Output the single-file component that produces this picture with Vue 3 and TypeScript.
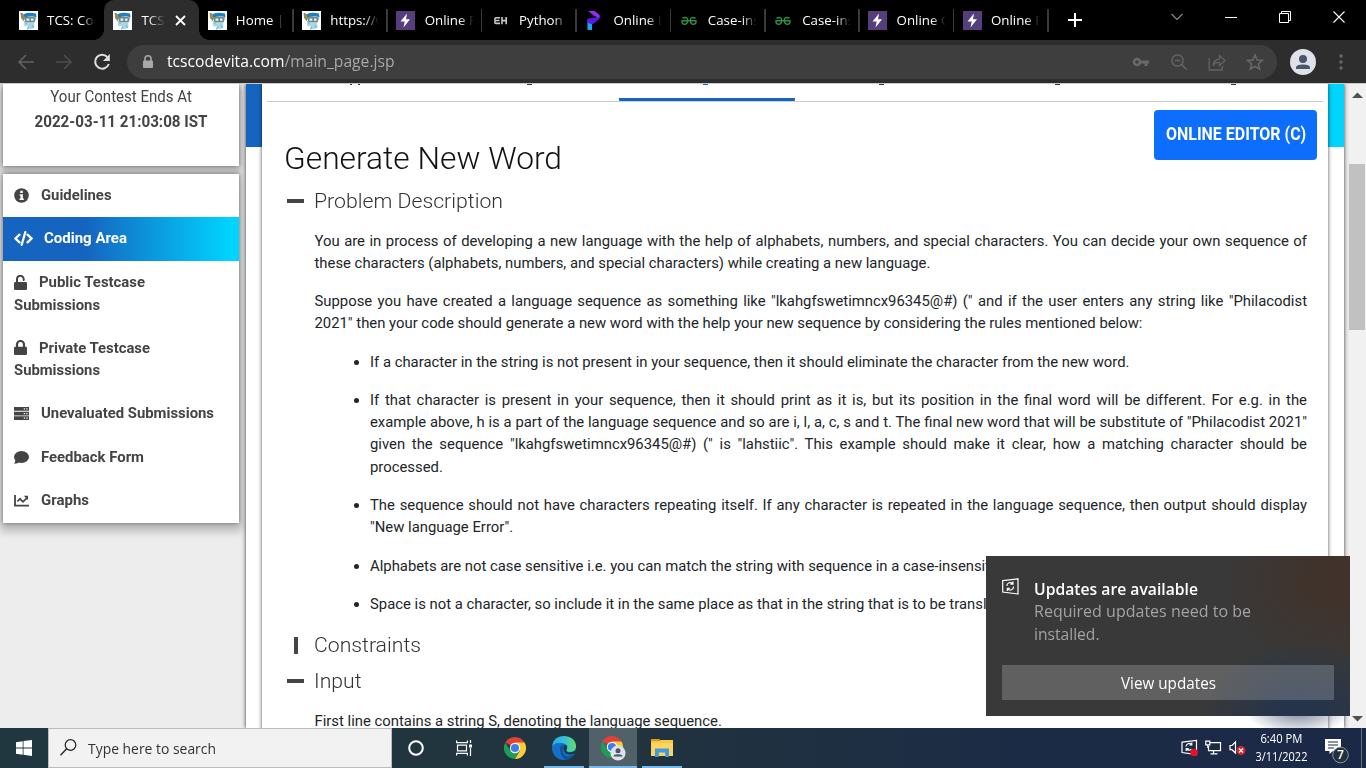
<script setup lang="ts">
import type { Directive } from 'vue'

// Stretches or narrows a single-line label so that it takes the given width.
const vFit: Directive<HTMLElement, number> = {
  mounted(el, binding) {
    const natural = el.getBoundingClientRect().width
    if (natural > 0) {
      el.style.transform = `scaleX(${binding.value / natural})`
    }
  },
}

interface Tab {
  icon: 'tcs' | 'bolt' | 'eh' | 'p' | 'gfg'
  title: string
  active?: boolean
  line?: boolean
}

const tabs: Tab[] = [
  { icon: 'tcs', title: 'TCS: Code' },
  { icon: 'tcs', title: 'TCS:', active: true },
  { icon: 'tcs', title: 'Home | T', line: true },
  { icon: 'tcs', title: 'https://w', line: true },
  { icon: 'bolt', title: 'Online P', line: true },
  { icon: 'eh', title: 'Python P', line: true },
  { icon: 'p', title: 'Online P', line: true },
  { icon: 'gfg', title: 'Case-ins', line: true },
  { icon: 'gfg', title: 'Case-ins', line: true },
  { icon: 'bolt', title: 'Online C', line: true },
  { icon: 'bolt', title: 'Online P', line: true },
]

interface MenuItem {
  icon: string
  lines: string[]
  widths: number[]
  cls: string
}

const menu: MenuItem[] = [
  { icon: 'info', lines: ['Guidelines'], widths: [70.5], cls: 'h43' },
  { icon: 'code', lines: ['Coding Area'], widths: [83], cls: 'h44 selected' },
  { icon: 'unlock', lines: ['Public Testcase', 'Submissions'], widths: [106, 86], cls: 'h65' },
  { icon: 'lock', lines: ['Private Testcase', 'Submissions'], widths: [111, 86], cls: 'h65' },
  { icon: 'server', lines: ['Unevaluated Submissions'], widths: [173], cls: 'h44' },
  { icon: 'comment', lines: ['Feedback Form'], widths: [103], cls: 'h43' },
  { icon: 'chart', lines: ['Graphs'], widths: [48], cls: 'h44' },
]

const intro: string[][] = [
  [
    'You are in process of developing a new language with the help of alphabets, numbers, and special characters. You can decide your own sequence of',
    'these characters (alphabets, numbers, and special characters) while creating a new language.',
  ],
  [
    'Suppose you have created a language sequence as something like "lkahgfswetimncx96345@#) (" and if the user enters any string like "Philacodist',
    '2021" then your code should generate a new word with the help your new sequence by considering the rules mentioned below:',
  ],
]

const rules: string[][] = [
  ['If a character in the string is not present in your sequence, then it should eliminate the character from the new word.'],
  [
    'If that character is present in your sequence, then it should print as it is, but its position in the final word will be different. For e.g. in the',
    'example above, h is a part of the language sequence and so are i, l, a, c, s and t. The final new word that will be substitute of "Philacodist 2021"',
    'given the sequence "lkahgfswetimncx96345@#) (" is "lahstiic". This example should make it clear, how a matching character should be',
    'processed.',
  ],
  [
    'The sequence should not have characters repeating itself. If any character is repeated in the language sequence, then output should display',
    '"New language Error".',
  ],
  ['Alphabets are not case sensitive i.e. you can match the string with sequence in a case-insensitive manner.'],
  ['Space is not a character, so include it in the same place as that in the string that is to be translated.'],
]
</script>

<template>
  <div class="screen">
    <header class="tabbar">
      <div class="tabs">
        <div v-for="(t, i) in tabs" :key="i" class="tab" :class="{ active: t.active, line: t.line }">
          <span class="fav">
            <svg v-if="t.icon === 'tcs'" width="19" height="19" viewBox="0 0 19 19">
              <rect width="19" height="19" fill="#fff" />
              <path d="M4 3.500Q8 .5 17 2.500L17.500 6.500Q11 4 5.500 7Z" fill="#1d7fc4" />
              <path d="M5 6.500Q11 4.500 17 6.800L15.500 11.500H6.500Z" fill="#6d8889" />
              <path d="M7.500 7.500h2.800v2.300H7.500zM12 7.500h2.500v2.300H12z" fill="#e8f4f6" />
              <path d="M6 11.500q5 1.500 9-.5l.5 5.500-3 1.500H8.500l.5-3-3 .5-1.500-2.500Z" fill="#a5d8e6" />
              <path d="M1.500 1.500l2.500 1 2 4.500-1.500 3L2 7Z" fill="#9b8a4c" />
              <path d="M4 9l3.500 4M9.500 15.500l-1 3M13 14l1.500 3" stroke="#62b4d4" stroke-width="1" />
            </svg>
            <svg v-else-if="t.icon === 'bolt'" width="19" height="19" viewBox="0 0 19 19">
              <rect width="19" height="19" fill="#563d7c" />
              <path d="M11 2.500L4.500 10.500H8.700L7.500 16.500L14 8.300H10Z" fill="#fff" />
            </svg>
            <svg v-else-if="t.icon === 'eh'" width="19" height="19" viewBox="0 0 19 19">
              <path d="M9 6.800H5Q3.800 6.800 3.800 8Q3.800 9.500 5 9.500H8.500M5 9.500Q3.800 9.500 3.800 11Q3.800 12.400 5 12.400H9M11 6v7.200M15.200 6v7.200M11 9.600h4.200" fill="none" stroke="#c9c9c9" stroke-width="1.600" />
            </svg>
            <svg v-else-if="t.icon === 'p'" width="19" height="19" viewBox="0 0 19 19">
              <path d="M2.500 9h4.500v10H2.500z" fill="#17a8f5" />
              <path d="M2.500 7.500l7-.5 5-3v3.500l-5 4.500-2.500 1.500-4.500-2Z" fill="#5a17e8" />
              <path d="M3 0h6.500L14.500 4v3L9.500 5Z" fill="#9a2bfb" />
            </svg>
            <svg v-else width="19" height="19" viewBox="0 0 19 19">
              <path d="M1.500 9.700H16.500M2.500 7.300Q7.700 4.800 7.700 9.700Q7.400 13.400 4.200 13.200Q1.500 12.800 2.100 9.700M15.500 7.300Q10.300 4.800 10.300 9.700Q10.600 13.400 13.800 13.200Q16.500 12.800 15.900 9.700" fill="none" stroke="#2f8d46" stroke-width="1.500" />
            </svg>
          </span>
          <span class="title">{{ t.title }}</span>
          <svg v-if="t.active" class="close" width="11" height="11" viewBox="0 0 11 11">
            <path d="M1 1l9 9M10 1l-9 9" stroke="#fff" stroke-width="1.800" />
          </svg>
        </div>
        <svg class="plus" width="14" height="14" viewBox="0 0 14 14">
          <path d="M7 0v14M0 7h14" stroke="#fff" stroke-width="2" />
        </svg>
      </div>
      <div class="winctl">
        <svg width="14" height="14" viewBox="0 0 14 14"><path d="M1.500 4l5.500 5.500L12.500 4" fill="none" stroke="#8c8c8c" stroke-width="1.100" /></svg>
        <svg width="14" height="14" viewBox="0 0 14 14"><path d="M1 7.500h12" stroke="#fff" /></svg>
        <svg width="14" height="14" viewBox="0 0 14 14"><path d="M1.500 3.500h9v9h-9zM3.500 3.500v-2h9v9h-2" fill="none" stroke="#fff" /></svg>
        <svg width="14" height="14" viewBox="0 0 14 14"><path d="M1.500 1.500l11 11M12.500 1.500l-11 11" stroke="#fff" stroke-width="1.100" /></svg>
      </div>
    </header>

    <div class="toolbar">
      <div class="nav">
        <svg width="18" height="18" viewBox="0 0 18 18"><path d="M17 9H2M9 2L2 9l7 7" fill="none" stroke="#626262" stroke-width="1.700" /></svg>
        <svg width="18" height="18" viewBox="0 0 18 18"><path d="M1 9h15M9 2l7 7-7 7" fill="none" stroke="#4c4c4c" stroke-width="1.700" /></svg>
        <svg width="18" height="18" viewBox="0 0 18 18"><path d="M14.800 4.500A7 7 0 1 0 15.800 11" fill="none" stroke="#dedede" stroke-width="2" /><path d="M16.800 1v7H10Z" fill="#dedede" /></svg>
      </div>
      <div class="omnibox">
        <svg class="padlock" width="12" height="14" viewBox="0 0 12 14"><path d="M3 6V3.800a3 3 0 0 1 6 0V6" fill="none" stroke="#a7a9ad" stroke-width="1.600" /><rect x="1" y="5.500" width="10" height="7.500" rx="1" fill="#a7a9ad" /></svg>
        <span v-fit="227.500" class="url"><b>tcscodevita.com</b>/main_page.jsp</span>
        <div class="actions">
          <svg width="18" height="18" viewBox="0 0 18 18"><circle cx="5" cy="9" r="3" fill="none" stroke="#686868" stroke-width="2.600" /><path d="M8.500 7.500H17v3h-1.500V13h-3v-2.500h-4Z" fill="#686868" /></svg>
          <svg width="18" height="18" viewBox="0 0 18 18"><circle cx="7.500" cy="7.500" r="5.600" fill="none" stroke="#636363" stroke-width="1.500" /><path d="M4.800 7.500h5.400M11.500 11.500l5 5" stroke="#636363" stroke-width="1.700" /></svg>
          <svg width="18" height="18" viewBox="0 0 18 18"><path d="M1.200 5v12h13v-4M5 12.500Q6 6.500 11.500 6V2.500L17 7.500l-5.500 5V9.500Q7 9 5 12.500Z" fill="none" stroke="#636363" stroke-width="1.300" /></svg>
          <svg width="18" height="18" viewBox="0 0 18 18"><path d="M9 2l2.100 5 5.400.4-4.100 3.500 1.300 5.300L9 13.300l-4.700 2.900 1.300-5.300L1.500 7.400 6.900 7Z" fill="none" stroke="#686868" stroke-width="1.500" /></svg>
        </div>
      </div>
      <svg class="avatar" width="26" height="26" viewBox="0 0 26 26"><circle cx="13" cy="13" r="13" fill="#dfe2e8" /><circle cx="13" cy="10" r="4" fill="#4a5669" /><path d="M6 20v-1.500Q6 15.500 13 15.500T20 18.500V20Z" fill="#4a5669" /></svg>
      <svg class="dots" width="4" height="16" viewBox="0 0 4 16"><circle cx="2" cy="2" r="1.700" fill="#686868" /><circle cx="2" cy="8" r="1.700" fill="#686868" /><circle cx="2" cy="14" r="1.700" fill="#686868" /></svg>
    </div>

    <div class="page">
      <aside class="side">
        <section class="card contest">
          <div><span v-fit="141.500" class="ends">Your Contest Ends At</span></div>
          <div><span v-fit="173" class="time">2022-03-11 21:03:08 IST</span></div>
        </section>
        <nav class="card menu">
          <div v-for="m in menu" :key="m.icon" class="item" :class="m.cls">
            <div class="row">
              <svg v-if="m.icon === 'info'" width="15" height="15" viewBox="0 0 15 15"><circle cx="7.500" cy="7.500" r="7.300" fill="#444" /><path d="M6.300 2.800h2.500v2.200H6.300zM5.700 6.200h3.200v4.200h.9v1.700H5.500v-1.700h1V7.800h-.8Z" fill="#fff" /></svg>
              <svg v-else-if="m.icon === 'code'" width="19" height="15" viewBox="0 0 19 15"><path d="M5.500 3.700L1.500 7.500l4 3.800M13.500 3.700l4 3.800-4 3.800M11.300 1.200L7.700 13.800" fill="none" stroke="#fff" stroke-width="2.300" stroke-linecap="round" /></svg>
              <svg v-else-if="m.icon === 'unlock'" width="13" height="15" viewBox="0 0 13 15"><path d="M3 7.500V4.200a3.300 3.300 0 0 1 6.700-.2V5" fill="none" stroke="#444" stroke-width="2" stroke-linecap="round" /><rect y="7" width="13" height="8" rx="1.300" fill="#444" /></svg>
              <svg v-else-if="m.icon === 'lock'" width="13" height="15" viewBox="0 0 13 15"><path d="M3 7.500V4.500a3.500 3.500 0 0 1 7 0v3" fill="none" stroke="#444" stroke-width="2.200" /><rect y="6.700" width="13" height="8.300" rx="1.300" fill="#444" /></svg>
              <svg v-else-if="m.icon === 'server'" width="15" height="15" viewBox="0 0 15 15"><path d="M0 1h15v3.700H0zM0 5.700h15v3.700H0zM0 10.300h15V14H0z" fill="#444" /><path d="M9.800 2.300h1.300v1.200H9.800zM12.300 2.300h1.300v1.200h-1.300zM9.800 7h1.300v1.200H9.800zM12.300 7h1.300v1.200h-1.300zM9.800 11.600h1.300v1.200H9.800zM12.300 11.600h1.300v1.200h-1.300z" fill="#fff" /></svg>
              <svg v-else-if="m.icon === 'comment'" width="15" height="15" viewBox="0 0 15 15"><ellipse cx="7.500" cy="7" rx="7.500" ry="5.900" fill="#444" /><path d="M1.500 9Q1.500 12 0 13.800Q3.500 14 5.500 12Z" fill="#444" /></svg>
              <svg v-else width="15" height="15" viewBox="0 0 15 15"><path d="M1 2v10.700h14" fill="none" stroke="#444" stroke-width="1.800" /><path d="M3.300 8.500l2.700-2.700 3 3 4-4" fill="none" stroke="#444" stroke-width="1.700" /><path d="M9.800 2.800H14V7Z" fill="#444" /></svg>
              <span v-fit="m.widths[0]" class="label">{{ m.lines[0] }}</span>
            </div>
            <div v-if="m.lines[1]" class="row"><span v-fit="m.widths[1]" class="label">{{ m.lines[1] }}</span></div>
          </div>
        </nav>
      </aside>

      <main class="outer">
        <div class="banner"></div>
        <article class="sheet">
          <div class="steps">
            <i class="wide"></i><i></i><i class="on"></i><i></i><i></i><i></i>
          </div>
          <div class="headrow">
            <h1 v-fit="278">Generate New Word</h1>
            <button class="editor"><span v-fit="140">ONLINE EDITOR (C)</span></button>
          </div>
          <h2><span class="bar"></span><span v-fit="189">Problem Description</span></h2>
          <div class="copy">
            <p v-for="(p, i) in intro" :key="i">
              <span v-for="(l, j) in p" :key="j" class="ln" :class="{ just: j < p.length - 1 }">{{ l }}</span>
            </p>
            <ul>
              <li v-for="(p, i) in rules" :key="i">
                <span v-for="(l, j) in p" :key="j" class="ln" :class="{ just: j < p.length - 1 }">{{ l }}</span>
              </li>
            </ul>
          </div>
          <h2><span class="bar upright"></span><span v-fit="107">Constraints</span></h2>
          <h2 class="gap"><span class="bar"></span><span v-fit="47.500">Input</span></h2>
          <div class="copy">
            <p><span class="ln">First line contains a string S, denoting the language sequence.</span></p>
          </div>
        </article>
      </main>

      <div class="scroll">
        <svg width="11" height="6" viewBox="0 0 11 6"><path d="M0 6L5.500 .5 11 6Z" fill="#505050" /></svg>
        <div class="thumb"></div>
        <svg class="down" width="11" height="6" viewBox="0 0 11 6"><path d="M0 0L5.500 5.500 11 0Z" fill="#505050" /></svg>
      </div>
    </div>

    <div class="glow"></div>
    <aside class="toast">
      <div class="msg">
        <svg width="17" height="17" viewBox="0 0 17 17"><path d="M.7 2.700L16 .8V16L.7 14Z" fill="none" stroke="#fff" stroke-width="1.200" /><path d="M4.800 8a3.400 3.400 0 0 1 6-2.200M11 3.500v2.600H8.500M11.600 8.600a3.400 3.400 0 0 1-6 2.200M5.300 13v-2.600h2.500" fill="none" stroke="#fff" stroke-width="1.200" /></svg>
        <div class="txt">
          <div><strong v-fit="164">Updates are available</strong></div>
          <div><span v-fit="217">Required updates need to be</span></div>
          <div><span v-fit="65.500">installed.</span></div>
        </div>
      </div>
      <button class="view"><span v-fit="95">View updates</span></button>
    </aside>

    <footer class="taskbar">
      <div class="start">
        <svg width="16" height="16" viewBox="0 0 16 16"><path d="M0 2.300l6.700-1v6.300H0zM7.500 1.100L16 0v7.600H7.500zM0 8.400h6.700v6.300L0 13.800zM7.500 8.400H16V16l-8.500-1.200z" fill="#fff" /></svg>
      </div>
      <div class="search">
        <svg width="17" height="17" viewBox="0 0 17 17"><circle cx="10.500" cy="6" r="5.300" fill="none" stroke="#222" stroke-width="1.200" /><path d="M6.600 9.800L.5 16.300" stroke="#222" stroke-width="1.300" /></svg>
        <span v-fit="128">Type here to search</span>
      </div>
      <div class="app near"><svg width="16" height="16" viewBox="0 0 16 16"><circle cx="8" cy="8" r="6.800" fill="none" stroke="#fff" stroke-width="2" /></svg></div>
      <div class="app near"><svg width="17" height="16" viewBox="0 0 17 16"><path d="M.6 .5v2.200h10.800V.5M.6 15.500v-2.200h10.800v2.200M1.500 5.200h9v5.600h-9zM14.500 0v3M14.500 8v8" fill="none" stroke="#fff" stroke-width="1.200" /><path d="M13 4.500h3v3h-3z" fill="#fff" /></svg></div>
      <div class="app">
        <svg width="22" height="22" viewBox="0 0 22 22"><path d="M11 11L1.470 5.500A11 11 0 0 1 20.530 5.500Z" fill="#e04237" /><path d="M1.470 5.500A11 11 0 0 0 11 22L15.800 13.600 6.200 13.700Z" fill="#1f9d55" /><path d="M20.530 5.500A11 11 0 0 1 11 22L15.800 13.700 11 5.500Z" fill="#fbcb38" /><circle cx="11" cy="11" r="5.200" fill="#fff" /><circle cx="11" cy="11" r="4.100" fill="#3f7ee8" /></svg>
      </div>
      <div class="app open">
        <svg width="24" height="24" viewBox="0 0 24 24">
          <defs>
            <linearGradient id="eg" x1="0" x2="1"><stop offset="0" stop-color="#29a8e8" /><stop offset=".5" stop-color="#35c1d8" /><stop offset="1" stop-color="#63df64" /></linearGradient>
          </defs>
          <circle cx="12" cy="12" r="12" fill="#1272c9" />
          <path d="M.2 10Q1.500 0 12 0Q24 1 24 11Q23 16 17.500 16Q13.500 15.500 14.800 13Q16.500 8 10 7Q4 6 .2 10Z" fill="url(#eg)" />
          <path d="M8 13Q8 8.500 12.500 8.700Q8 15 13 19.500Q17 22 22 18Q19 23.500 13.500 24Q8 20 8 13Z" fill="#124f99" />
          <path d="M13 8.800Q16 9.500 15 12.500Q13.300 15 15 15.800Q18 17.500 24 14.500L23 17.500Q15 20.500 12 15Q10.500 11 13 8.800Z" fill="#21343f" />
        </svg>
      </div>
      <div class="app current">
        <svg width="26" height="26" viewBox="0 0 26 26"><g transform="translate(1 1)"><path d="M11 11L1.470 5.500A11 11 0 0 1 20.530 5.500Z" fill="#e04237" /><path d="M1.470 5.500A11 11 0 0 0 11 22L15.800 13.600 6.200 13.700Z" fill="#1f9d55" /><path d="M20.530 5.500A11 11 0 0 1 11 22L15.800 13.700 11 5.500Z" fill="#fbcb38" /><circle cx="11" cy="11" r="5.200" fill="#fff" /><circle cx="11" cy="11" r="4.100" fill="#3f7ee8" /></g><circle cx="18" cy="18" r="7.600" fill="#dfe2e8" /><circle cx="18" cy="15.800" r="2.500" fill="#4a5669" /><path d="M13.500 21.500Q13.500 19.200 18 19.200T22.500 21.500Z" fill="#4a5669" /></svg>
      </div>
      <div class="app open">
        <svg width="22" height="20" viewBox="0 0 22 20"><path d="M0 1h8.500l1.500 2H0Z" fill="#d99a1c" /><path d="M0 3h22v15H0Z" fill="#fcd462" /><path d="M0 3h9l1-1h12v3H0Z" fill="#f9c843" /><path d="M4 19v-8.500h14V19h-3.800v-4.500H7.800V19Z" fill="#3f9be0" /></svg>
      </div>
      <div class="tray">
        <svg class="upd" width="18" height="18" viewBox="0 0 18 18"><path d="M1 3.200L15.500 1.500V15.500L1 13.500Z" fill="none" stroke="#fff" stroke-width="1.200" /><path d="M5 7.500a3.200 3.200 0 0 1 5.500-2M10.800 3.600v2.400H8.400M5.200 12l0-2.400h2.500M5.500 9.800q2 2.500 5 .5" fill="none" stroke="#fff" stroke-width="1.200" /><circle cx="13" cy="13.500" r="3.700" fill="#e81123" /></svg>
        <svg class="net" width="17" height="16" viewBox="0 0 17 16"><path d="M5 2.600h10.500v8H3.500V6M8.500 10.600v3M5.500 13.800h7M.8 1.200h4v3.600h-4zM2.800 4.800V8" fill="none" stroke="#fff" stroke-width="1.200" /></svg>
        <svg class="vol" width="17" height="16" viewBox="0 0 17 16"><path d="M1 5.500h2L6.500 2v11L3 9.700H1Z" fill="none" stroke="#fff" stroke-width="1.200" /><circle cx="12" cy="10.500" r="4.500" fill="#d8252c" /><path d="M10 8.500l4 4M14 8.500l-4 4" stroke="#fff" stroke-width="1.200" /></svg>
        <div class="clock">
          <span v-fit="42">6:40 PM</span>
          <span v-fit="52">3/11/2022</span>
        </div>
        <svg class="note" width="26" height="26" viewBox="0 0 26 26"><path d="M1 1h16v12H9L5.500 16v-3H1Z" fill="#fff" /><path d="M4 4h10M4 7h10M4 10h6" stroke="#1b2a49" stroke-width="1.200" /><circle cx="16.500" cy="17" r="7.800" fill="#22303c" stroke="#8d949c" /><text x="16.500" y="21.200" text-anchor="middle" font-size="12" font-family="Open Sans, sans-serif" font-weight="600" fill="#fff">7</text></svg>
        <div class="peek"></div>
      </div>
    </footer>
  </div>
</template>

<style>
body {
  overflow: hidden;
}
</style>

<style scoped>
* {
  box-sizing: border-box;
}
.screen {
  position: relative;
  width: 1366px;
  height: 768px;
  overflow: hidden;
  display: flex;
  flex-direction: column;
  font-family: 'Open Sans', 'Noto Sans', sans-serif;
  background: #ededed;
}
svg {
  flex: none;
  display: block;
}
.screen span,
.screen strong,
h1 {
  white-space: nowrap;
}
.title,
.url,
.ends,
.time,
.label,
.search span,
.editor span,
.view span,
.txt span,
.txt strong,
.clock span,
h1,
h2 span {
  display: inline-block;
  transform-origin: 0 50%;
}

.tabbar {
  height: 40px;
  background: #000;
  display: flex;
  justify-content: space-between;
}
.tabs {
  display: flex;
  padding-left: 9.900px;
}
.tab {
  width: 94.400px;
  height: 40px;
  padding: 0 15px 0 9px;
  display: flex;
  align-items: center;
  position: relative;
}
.tab.line::after {
  content: '';
  position: absolute;
  right: -0.500px;
  top: 9px;
  width: 1.500px;
  height: 23px;
  background: #3a3a3a;
}
.tab.active {
  background: #2d2d2d;
  border-radius: 10px 10px 0 0;
}
.tab.active::before,
.tab.active::after {
  content: '';
  position: absolute;
  bottom: 0;
  left: -10px;
  width: 10px;
  height: 10px;
  background: radial-gradient(circle at 0 0, #000 9.500px, #2d2d2d 10px);
}
.tab.active::after {
  left: auto;
  right: -10px;
  background: radial-gradient(circle at 100% 0, #000 9.500px, #2d2d2d 10px);
}
.fav {
  width: 19px;
  margin-right: 9.200px;
  flex: none;
}
.title {
  width: 49px;
  flex: none;
  overflow: hidden;
  font-size: 13.300px;
  color: #fff;
  -webkit-mask-image: linear-gradient(90deg, #000 70%, transparent 99%);
  mask-image: linear-gradient(90deg, #000 70%, transparent 99%);
}
.active .title {
  width: 25px;
  -webkit-mask-image: linear-gradient(90deg, #000 30%, transparent 98%);
  mask-image: linear-gradient(90deg, #000 30%, transparent 98%);
}
.close {
  margin-left: 8.800px;
}
.plus {
  margin: 13px 0 0 19.500px;
}
.winctl {
  display: flex;
  gap: 40px;
  padding: 10px 20px 0 0;
}

.toolbar {
  height: 44px;
  background: #2d2d2d;
  border-bottom: 1px solid #c9c9c9;
  display: flex;
  align-items: center;
}
.nav {
  width: 127px;
  padding-left: 17px;
  display: flex;
  gap: 20px;
}
.omnibox {
  width: 1150px;
  height: 34px;
  border-radius: 17px;
  background: #3e3e3e;
  display: flex;
  align-items: center;
  padding: 0 13px 0 15px;
}
.url {
  margin: -2px 0 0 13px;
  font-size: 16px;
  color: #a8a8a8;
}
.url b {
  font-weight: 400;
  color: #fff;
}
.actions {
  margin-left: auto;
  display: flex;
  gap: 20px;
}
.avatar {
  margin-left: 13px;
}
.dots {
  margin-left: 23px;
}

.page {
  height: 644px;
  display: flex;
  overflow: hidden;
  font-family: Roboto, sans-serif;
  color: #212529;
}
.side {
  width: 246px;
  padding-left: 3px;
  flex: none;
}
.card {
  width: 236px;
  background: #fff;
  box-shadow: 0 0 5px rgba(0, 0, 0, 0.450), 0 6px 8px 3px rgba(0, 0, 0, 0.200);
}
.contest {
  height: 82px;
  text-align: center;
  color: #444;
  font-size: 17px;
  line-height: 25px;
}
.ends,
.time {
  transform-origin: 50% 50%;
}
.time {
  font-weight: 700;
}
.menu {
  margin-top: 8px;
  position: relative;
}
.item {
  padding: 10px 11px 0;
  color: #444;
  font-size: 15px;
  font-weight: 700;
}
.row {
  display: flex;
  align-items: center;
  height: 22.500px;
}
.row svg + .label {
  margin-left: 12px;
}
.selected {
  color: #fff;
  background: linear-gradient(90deg, #1565c0 0%, #1565c0 35%, #00d4ff 97%);
}
.selected .row svg + .label {
  margin-left: 11px;
}
.h43 {
  height: 43px;
}
.h44 {
  height: 44px;
}
.h65 {
  height: 65.500px;
}

.outer {
  width: 1098px;
  background: #fff;
  box-shadow: 0 0 4px rgba(0, 0, 0, 0.800);
  position: relative;
  padding: 0 16px;
}
.banner {
  height: 63px;
  margin: 0 -16px -63px;
  background: linear-gradient(90deg, #1565c0 35%, #00d4ff 97%);
}
.sheet {
  position: relative;
  height: 660px;
  background: #fff;
  box-shadow: 0 0 4px rgba(0, 0, 0, 0.700);
}
.steps {
  height: 18px;
  margin: 0 5px;
  border-bottom: 1px solid #ccc;
  display: grid;
  grid-template-columns: repeat(6, 176px);
}
.steps i {
  border-bottom: 3px solid transparent;
  background: linear-gradient(#333, #333) 84px 0 / 5px 1px no-repeat;
}
.steps .wide {
  background:
    linear-gradient(#333, #333) 83px 0 / 2px 1px no-repeat,
    linear-gradient(#333, #333) 91px 0 / 2px 1px no-repeat;
}
.steps .on {
  border-bottom-color: #1565c0;
  border-radius: 1px;
  background-image: linear-gradient(#1565c0, #1565c0);
}
.headrow {
  display: flex;
  justify-content: space-between;
  padding: 8px 11px 0 21.500px;
  height: 86px;
}
h1 {
  margin: 28px 0 0;
  height: 40px;
  line-height: 40px;
  font-size: 32px;
  font-weight: 300;
  color: #111;
}
.editor {
  width: 163px;
  height: 50px;
  padding: 0 0 3px 12px;
  border: 0;
  border-radius: 4px;
  background: #0d6efd;
  color: #fff;
  text-align: left;
  font: 700 19px Roboto, sans-serif;
}
h2 {
  margin: 0;
  height: 26px;
  padding-left: 25px;
  display: flex;
  align-items: center;
  font-size: 21px;
  font-weight: 300;
  line-height: 26px;
  color: #333;
}
h2.gap {
  margin-top: 10px;
}
.bar {
  width: 17px;
  height: 4px;
  margin-right: 9.500px;
  background: #444;
}
.bar.upright {
  width: 4px;
  height: 17px;
  margin: 0 15.500px 0 7px;
}
.copy {
  padding: 15.500px 21px 0 52.500px;
  font-size: 14.850px;
  line-height: 22.275px;
}
.copy p {
  margin: 0 0 16px;
}
.copy ul {
  margin: 0;
  padding: 0 0 0.900px 55.500px;
}
.copy li {
  margin-bottom: 16px;
}
.ln {
  display: block;
}
.just {
  text-align: justify;
  text-align-last: justify;
  white-space: normal !important;
}

.scroll {
  margin-left: auto;
  width: 17px;
  background: #f1f1f1;
  display: flex;
  flex-direction: column;
  align-items: center;
  padding: 8px 0 6px;
}
.thumb {
  width: 16px;
  height: 166px;
  margin: 66px 1px 0 0;
  background: #c1c1c1;
}
.down {
  margin-top: auto;
}

.glow {
  position: absolute;
  left: 1240px;
  top: 690px;
  width: 109px;
  height: 38px;
  background: radial-gradient(ellipse 52px 24px at 58px 21px, rgba(50, 70, 100, 0.650), rgba(50, 70, 100, 0));
}
.toast {
  position: absolute;
  left: 986px;
  top: 556px;
  width: 364px;
  height: 160px;
  padding: 22px 16px 0;
  color: #fff;
  background:
    radial-gradient(ellipse 100px 75px at 315px 160px, #26344a 25%, rgba(38, 52, 74, 0)),
    radial-gradient(ellipse 115px 90px at 350px 25px, #40332c 25%, rgba(64, 51, 44, 0)),
    #393939;
}
.msg {
  display: flex;
  gap: 15px;
  height: 87px;
}
.txt {
  font-size: 16px;
  line-height: 22.300px;
  color: #a3a3a3;
}
.txt strong {
  font-weight: 600;
  color: #fff;
}
.view {
  display: block;
  width: 332px;
  height: 35px;
  padding: 0 0 0 119px;
  border: 0;
  text-align: left;
  background: rgba(255, 255, 255, 0.200);
  color: #fff;
  font: 15.500px 'Open Sans', sans-serif;
}

.taskbar {
  height: 40px;
  display: flex;
  background: linear-gradient(90deg, #213740 0%, #21343f 45%, #1c2b45 75%, #1b2947 100%);
  color: #fff;
}
.start {
  width: 48px;
  display: grid;
  place-items: center;
}
.search {
  width: 344px;
  padding: 0 12px 1px 11px;
  display: flex;
  align-items: center;
  gap: 11px;
  background: #f2f2f2;
  border: 1px solid #bcbcbc;
  color: #333;
  font-size: 15px;
}
.app {
  width: 49px;
  display: grid;
  place-items: center;
  position: relative;
}
.near {
  padding-right: 2px;
}
.open::after,
.current::after {
  content: '';
  position: absolute;
  left: 5px;
  right: 4px;
  bottom: 0;
  height: 2px;
  background: #76b9ed;
}
.current {
  left: 1px;
  background: #51616a;
  background-clip: content-box;
  padding-right: 1px;
}
.current::after {
  left: 0;
  right: 1px;
}
.tray {
  margin-left: auto;
  display: flex;
  align-items: center;
}
.net {
  margin-left: 6px;
}
.vol {
  margin-left: 7px;
}
.clock {
  width: 52px;
  margin-left: 9px;
  font-size: 12px;
  line-height: 18px;
  display: flex;
  flex-direction: column;
  align-items: center;
}
.clock span {
  transform-origin: 50% 50%;
}
.note {
  margin: 5px 0 0 17px;
}
.peek {
  width: 5px;
  height: 40px;
  margin-left: 11px;
  border-left: 1px solid #68727f;
}
</style>
